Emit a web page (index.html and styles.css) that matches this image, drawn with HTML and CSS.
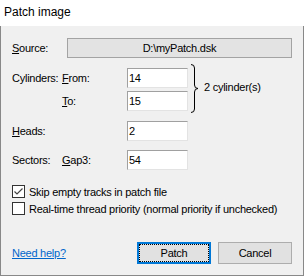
FILE: index.html
```html
<!DOCTYPE html>
<html lang="en">
<head>
    <meta charset="UTF-8">
    <title>Patch image</title>
    <link rel="stylesheet" href="styles.css">
</head>
<body>
    <div class="window">
        <div class="titlebar">Patch image</div>

        <div class="client">
            <div class="row source-row">
                <span class="lbl-wide"><u>S</u>ource:</span>
                <div class="static-box">D:\myPatch.dsk</div>
            </div>

            <div class="row cyl-row">
                <span class="lbl">Cylinders:</span>
                <div class="pair">
                    <div class="row">
                        <span class="sub"><u>F</u>rom:</span>
                        <div class="edit">14</div>
                    </div>
                    <div class="row">
                        <span class="sub"><u>T</u>o:</span>
                        <div class="edit">15</div>
                    </div>
                </div>
                <svg class="brace" width="9" height="49" viewBox="0 0 9 49">
                    <path d="M1 0.5 Q4.5 0.5 4.5 4 V21 Q4.5 24.5 8 24.5 Q4.5 24.5 4.5 28 V45 Q4.5 48.5 1 48.5" fill="none" stroke="#000" stroke-width="1"/>
                </svg>
                <span class="count">2 cylinder(s)</span>
            </div>

            <div class="row heads-row">
                <span class="lbl"><u>H</u>eads:</span>
                <span class="sub"></span>
                <div class="edit">2</div>
            </div>

            <div class="row sectors-row">
                <span class="lbl">Sectors:</span>
                <span class="sub"><u>G</u>ap3:</span>
                <div class="edit">54</div>
            </div>

            <div class="checks">
                <label class="check">
                    <span class="box">
                        <svg width="11" height="11" viewBox="0 0 11 11"><path d="M1.5 5.5 L4 8 L9.5 2.5" fill="none" stroke="#444" stroke-width="1.2"/></svg>
                    </span>
                    Skip empty tracks in patch file
                </label>
                <label class="check">
                    <span class="box"></span>
                    Real-time thread priority (normal priority if unchecked)
                </label>
            </div>

            <div class="footer">
                <a href="#" class="help">Need help?</a>
                <div class="buttons">
                    <button class="btn default">Patch</button>
                    <button class="btn">Cancel</button>
                </div>
            </div>
        </div>
    </div>
</body>
</html>
```

FILE: styles.css
```css
body {
    margin: 0;
    font-family: "Liberation Sans", Arial, sans-serif;
    font-size: 11px;
    color: #000;
    background: #fff;
}
.window {
    width: 304px;
    height: 276px;
    display: flex;
    flex-direction: column;
}
.titlebar {
    height: 26px;
    line-height: 25px;
    padding-left: 4px;
    font-size: 12px;
    background: #fff;
}
.client {
    flex: 1;
    display: flex;
    flex-direction: column;
    background: #f0f0f0;
    border: 1px solid #888;
    border-top: none;
    padding: 12px 11px 11px 11px;
    letter-spacing: -0.25px;
}
.row {
    display: flex;
    align-items: center;
}
.lbl-wide {
    width: 55px;
}
.static-box {
    width: 226px;
    height: 20px;
    box-sizing: border-box;
    border: 1px solid #a3a3a3;
    background: #e3e3e3;
    text-align: center;
    line-height: 18px;
}
.lbl {
    width: 50px;
}
.sub {
    width: 65px;
}
.edit {
    width: 61px;
    height: 20px;
    box-sizing: border-box;
    background: #fff;
    border-top: 1px solid #a0a0a0;
    border-left: 1px solid #a0a0a0;
    border-right: 1px solid #e3e3e3;
    border-bottom: 1px solid #e3e3e3;
    padding-left: 1px;
    line-height: 18px;
}
.cyl-row {
    margin-top: 10px;
    align-items: flex-start;
}
.cyl-row > .lbl {
    line-height: 20px;
}
.pair {
    display: flex;
    flex-direction: column;
    gap: 3px;
}
.brace {
    margin-top: -4px;
    margin-left: 2px;
}
.count {
    margin-left: 5px;
    margin-top: 13px;
}
.heads-row {
    margin-top: 8px;
}
.sectors-row {
    margin-top: 9px;
}
.checks {
    margin-top: 13px;
}
.check {
    display: flex;
    align-items: center;
    height: 17px;
    gap: 4px;
}
.box {
    width: 13px;
    height: 13px;
    box-sizing: border-box;
    border: 1px solid #333;
    background: #fff;
    display: flex;
    align-items: center;
    justify-content: center;
}
.footer {
    margin-top: auto;
    display: flex;
    align-items: center;
    justify-content: space-between;
}
.help {
    color: #0066cc;
    text-decoration: underline;
}
.buttons {
    display: flex;
    gap: 7px;
}
.btn {
    width: 74px;
    height: 22px;
    box-sizing: border-box;
    font-family: inherit;
    font-size: 11px;
    letter-spacing: -0.25px;
    color: #000;
    background: #e1e1e1;
    border: 1px solid #adadad;
    padding: 0;
}
.btn.default {
    border: 2px solid #0078d7;
    outline: 1px dotted #000;
    outline-offset: -3px;
}
```
